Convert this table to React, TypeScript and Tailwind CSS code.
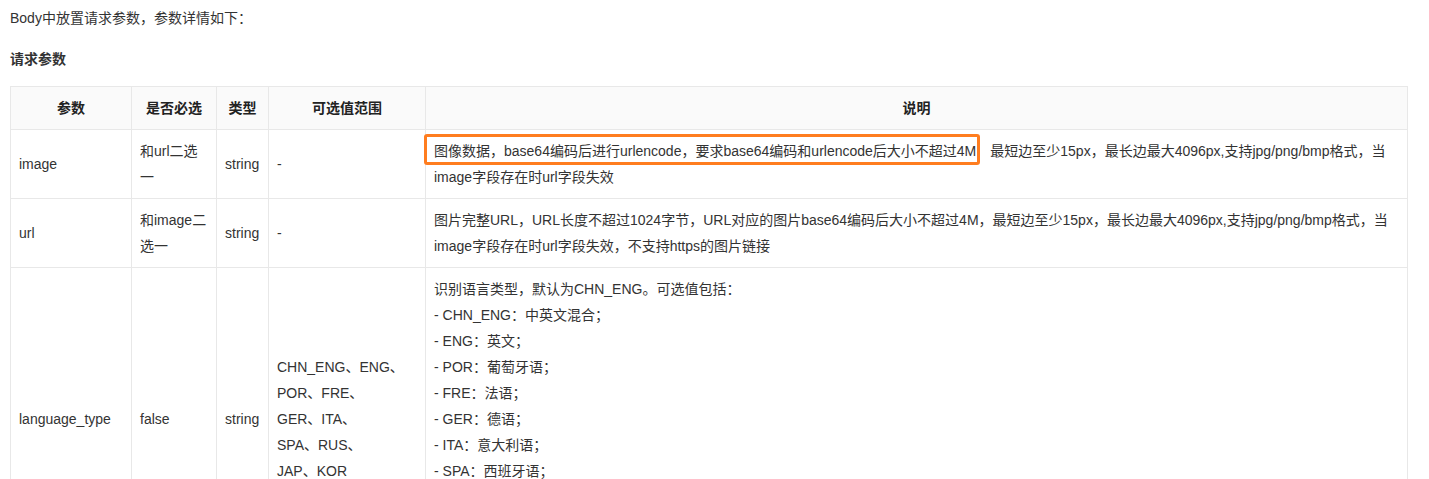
import React from 'react';

const font = { fontFamily: '"Liberation Sans", "Noto Sans CJK SC", sans-serif' };

const cell = 'border border-[#e8e8e8] px-[8px] py-[8px] align-middle';
const head = `${cell} text-center font-semibold`;

export default function App() {
  return (
    <div style={font} className="bg-white h-[479px] overflow-hidden pl-[10px] pr-[22px] pt-[5px] text-[14px] leading-[26px] text-[#333]">
      <p className="mb-[15px]">Body中放置请求参数，参数详情如下：</p>
      <p className="mb-[14px] font-semibold">请求参数</p>

      <table className="w-[1398px] table-fixed border-collapse">
        <colgroup>
          <col className="w-[121px]" />
          <col className="w-[85px]" />
          <col className="w-[52px]" />
          <col className="w-[157px]" />
          <col />
        </colgroup>
        <thead>
          <tr className="bg-[#fafafa] text-[#222]">
            <th className={head}>参数</th>
            <th className={head}>是否必选</th>
            <th className={head}>类型</th>
            <th className={head}>可选值范围</th>
            <th className={head}>说明</th>
          </tr>
        </thead>
        <tbody className="text-left">
          <tr>
            <td className={cell}>image</td>
            <td className={cell}>和url二选一</td>
            <td className={cell}>string</td>
            <td className={cell}>-</td>
            <td className={cell}>
              <div className="relative">
                图像数据，base64编码后进行urlencode，要求base64编码和urlencode后大小不超过4M<span className="text-transparent">，</span>最短边至少15px，最长边最大4096px,支持jpg/png/bmp格式，当
                <br />
                image字段存在时url字段失效
                {/* annotation box */}
                <div className="absolute left-[-10px] top-[-4px] w-[556px] h-[31px] border-[3px] border-[#ff7d1f] rounded-[3px] pointer-events-none" />
              </div>
            </td>
          </tr>
          <tr>
            <td className={cell}>url</td>
            <td className={cell}>和image二选一</td>
            <td className={cell}>string</td>
            <td className={cell}>-</td>
            <td className={cell}>
              图片完整URL，URL长度不超过1024字节，URL对应的图片base64编码后大小不超过4M，最短边至少15px，最长边最大4096px,支持jpg/png/bmp格式，当
              <br />
              image字段存在时url字段失效，不支持https的图片链接
            </td>
          </tr>
          <tr>
            <td className={cell}>language_type</td>
            <td className={cell}>false</td>
            <td className={cell}>string</td>
            <td className={cell}>
              CHN_ENG、ENG、<br />
              POR、FRE、<br />
              GER、ITA、<br />
              SPA、RUS、<br />
              JAP、KOR
            </td>
            <td className={cell}>
              识别语言类型，默认为CHN_ENG。可选值包括：<br />
              - CHN_ENG：中英文混合；<br />
              - ENG：英文；<br />
              - POR：葡萄牙语；<br />
              - FRE：法语；<br />
              - GER：德语；<br />
              - ITA：意大利语；<br />
              - SPA：西班牙语；<br />
              - RUS：俄语；<br />
              - JAP：日语；<br />
              - KOR：韩语
            </td>
          </tr>
        </tbody>
      </table>
    </div>
  );
}
